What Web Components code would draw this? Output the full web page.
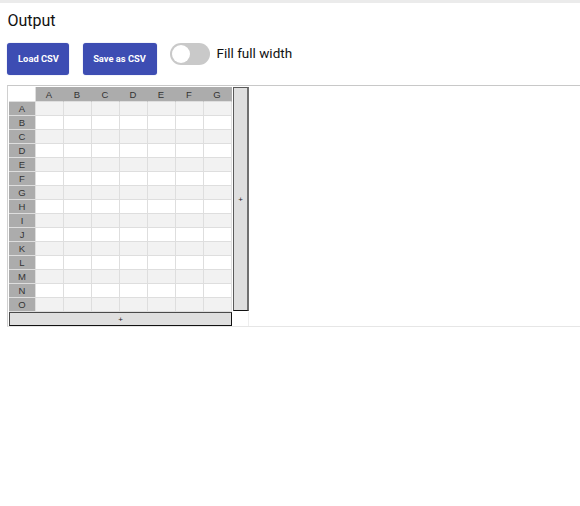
<!DOCTYPE html>
<html lang="en">
<head>
<meta charset="utf-8">
<title>Output</title>
<style>
html,body{margin:0;height:100%;background:#fff;overflow:hidden}
</style>
</head>
<body>
<output-panel></output-panel>
<script>
const define = (name, html, setup) => customElements.define(name, class extends HTMLElement {
  connectedCallback() {
    if (this.shadowRoot) return;
    const root = this.attachShadow({ mode: 'open' });
    root.innerHTML = html;
    if (setup) setup(root, this);
  }
});

define('action-button', `
<style>
:host{display:block}
button{display:flex;align-items:center;justify-content:center;width:100%;height:32px;padding:0 1px 2px 0;border:0;border-radius:3px;
background:#3d4db3;color:#fff;font:700 9.33px Roboto,sans-serif;white-space:nowrap;box-shadow:0 0 1px #3f51b599}
:host(.load) button{padding:0 0 2px 1px}
</style>
<button><slot></slot></button>`);

define('toggle-switch', `
<style>
:host{display:flex;align-items:flex-start;gap:6.5px;font:400 13.5px/21px Roboto,sans-serif;color:#111}
.track{box-sizing:border-box;width:40px;height:22px;border-radius:11px;background:#c9c9c9;padding:2px}
.thumb{width:18px;height:18px;border-radius:50%;background:#fff}
</style>
<div class="track"><div class="thumb"></div></div><span><slot></slot></span>`);

define('add-bar', `
<style>
:host{display:flex;align-items:center;justify-content:center;box-sizing:border-box;background:#dfdfdf;
border:1px solid;font:8px/8px "Liberation Sans",sans-serif;color:#222}
span{padding-top:1px}
:host([side=bottom]){border-color:#4a4a4a #111 #111 #4a4a4a}
:host([side=right]){border-width:1px 2px 1px 1px;border-color:#5a5a5a #707070 #111 #5a5a5a}
</style>
<span>+</span>`);

define('data-sheet', `
<style>
:host{display:block;border-top:1px solid #c8c8c8;border-left:1px solid #d0d0d0;border-bottom:1px solid #e6e6e6;
padding:1px 0 0 1px;font:9.5px/14px "Liberation Sans",sans-serif;color:#333}
.frame{display:grid;grid-template-columns:223px 16px;grid-template-rows:225px 14px;column-gap:1px;width:240px;height:239px}
.grid{display:grid;grid-template-columns:27px repeat(7,28px);grid-template-rows:15px repeat(15,14px)}
.grid>div{box-sizing:border-box;border-right:1px solid #dedede;border-bottom:1px solid #dedede;text-align:center;overflow:hidden}
.grid>.head{background:#acacac}
.grid>.col{border-right-color:#acacac;line-height:15px;padding-right:1px}
.grid>.alt{background:#f2f2f2}
.right{margin-bottom:1px}
.corner{border:solid #eee;border-width:0 1px 0 0}
</style>
<div class="frame"><div class="grid"></div><add-bar class="right" side="right"></add-bar><add-bar side="bottom"></add-bar><div class="corner"></div></div>`,
root => {
  const grid = root.querySelector('.grid');
  const cell = (cls, text = '') => {
    const d = document.createElement('div');
    d.className = cls;
    d.textContent = text;
    grid.append(d);
  };
  cell('');
  for (const c of 'ABCDEFG') cell('head col', c);
  [...'ABCDEFGHIJKLMNO'].forEach((r, i) => {
    cell('head', r);
    for (let c = 0; c < 7; c++) cell(i % 2 ? '' : 'alt');
  });
});

define('output-panel', `
<style>
:host{display:block;border-top:3px solid #ebebeb;padding-left:7px}
h1{margin:0;padding-top:7px;font:400 16px/21px Roboto,sans-serif;color:#111;text-indent:.5px}
.bar{display:flex;margin-top:12px;height:42px}
.load{width:62px;margin-right:14px}
.save{width:74px;margin-right:13px}
</style>
<h1>Output</h1>
<div class="bar"><action-button class="load">Load CSV</action-button><action-button class="save">Save as CSV</action-button><toggle-switch>Fill full width</toggle-switch></div>
<data-sheet></data-sheet>`);
</script>
</body>
</html>
